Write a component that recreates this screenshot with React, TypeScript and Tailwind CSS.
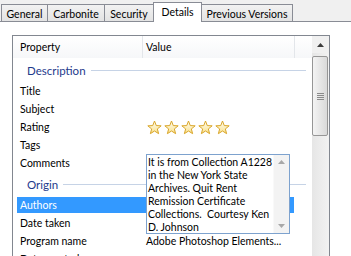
import React from "react";

function Star() {
  return (
    <svg width="15" height="15" viewBox="0 0 15 15">
      <defs>
        <linearGradient id="sg" x1="0" y1="0" x2="0" y2="1">
          <stop offset="0" stopColor="#fffef5" />
          <stop offset="1" stopColor="#f9e08a" />
        </linearGradient>
      </defs>
      <polygon
        points="7.5,1 9.26,5.57 14.16,5.84 10.35,8.93 11.61,13.66 7.5,11 3.39,13.66 4.65,8.93 0.84,5.84 5.74,5.57"
        fill="url(#sg)"
        stroke="#d9a62a"
        strokeWidth="1"
        strokeLinejoin="round"
      />
    </svg>
  );
}

function Tab({ label, w, selected }: { label: string; w: string; selected?: boolean }) {
  if (selected) {
    return (
      <div
        className={`${w} -ml-px h-[20px] mb-[-1px] relative z-10 bg-white border border-b-0 border-[#898c95] flex items-center justify-center pb-[1px]`}
      >
        {label}
      </div>
    );
  }
  return (
    <div
      className={`${w} -ml-px first:ml-0 h-[17px] bg-gradient-to-b from-[#f2f2f2] to-[#e3e3e3] border border-b-0 border-[#898c95] flex items-center justify-center pt-[2px]`}
    >
      {label}
    </div>
  );
}

function Row({ label, children, selected }: { label: string; children?: React.ReactNode; selected?: boolean }) {
  return (
    <div className="h-[18px] relative flex">
      <div
        className={`flex items-center ml-[4px] my-[1px] w-[277px] ${selected ? "bg-[#3399ff] text-white" : ""}`}
      >
        <div className="w-[129px] pl-[3px] whitespace-nowrap">{label}</div>
        <div className="flex-1 whitespace-nowrap flex items-center">{children}</div>
      </div>
    </div>
  );
}

function Group({ label }: { label: string }) {
  return (
    <div className="h-[24px] flex items-center pl-[14px] pr-[6px] pt-[1px]">
      <span className="text-[#1e3a8c] text-[11.5px]">{label}</span>
      <div className="flex-1 h-px bg-[#c6d3e6] ml-[5px]" />
    </div>
  );
}

export default function App() {
  return (
    <div className="w-[351px] h-[256px] overflow-hidden bg-white text-[10.5px] leading-[13px] text-black font-['Lato',sans-serif] flex flex-col">
      {/* tab strip */}
      <div className="h-[22px] shrink-0 bg-[#f0f0f0] border-b border-[#898c95] flex items-end pl-[1px]">
        <Tab label="General" w="w-[47px]" />
        <Tab label="Carbonite" w="w-[58px]" />
        <Tab label="Security" w="w-[50px]" />
        <Tab label="Details" w="w-[49px]" selected />
        <Tab label="Previous Versions" w="w-[92px]" />
      </div>

      {/* panel */}
      <div className="flex-1 bg-white pl-[12px] pt-[13px]">
        <div className="w-[318px] h-[260px] border border-[#828790] flex bg-white">
          {/* list content */}
          <div className="w-[299px] flex flex-col">
            {/* header */}
            <div className="h-[22px] flex bg-gradient-to-b from-white to-[#f6f7f9]">
              <div className="w-[130px] pl-[7px] flex items-center border-r border-[#e3e6ea]">Property</div>
              <div className="w-[152px] pl-[3px] flex items-center border-r border-[#e3e6ea]">Value</div>
              <div className="flex-1" />
            </div>

            <Group label="Description" />
            <Row label="Title" />
            <Row label="Subject" />
            <Row label="Rating">
              <div className="flex gap-[2px] ml-[1px]">
                <Star />
                <Star />
                <Star />
                <Star />
                <Star />
              </div>
            </Row>
            <Row label="Tags" />
            <div className="h-[18px] relative z-10">
              <div className="flex items-center h-full ml-[4px]">
                <div className="w-[129px] pl-[3px]">Comments</div>
              </div>
              <div className="absolute left-[133px] top-0 w-[144px] h-[80px] border border-[#7da2ce] bg-white flex">
                <div className="flex-1 pl-[1px] pt-[1px] leading-[13px] whitespace-nowrap overflow-hidden">
                  <div>It is from Collection A1228</div>
                  <div>in the New York State</div>
                  <div>Archives. Quit Rent</div>
                  <div>Remission Certificate</div>
                  <div>Collections.&nbsp; Courtesy Ken</div>
                  <div>D. Johnson</div>
                </div>
                <div className="w-[16px] bg-[#f3f3f3] border-l border-[#f9f9f9] flex flex-col items-center justify-between py-[5px]">
                  <svg width="7" height="4" viewBox="0 0 7 4">
                    <polygon points="0,4 7,4 3.5,0" fill="#a8a8a8" />
                  </svg>
                  <svg width="7" height="4" viewBox="0 0 7 4">
                    <polygon points="0,0 7,0 3.5,4" fill="#a8a8a8" />
                  </svg>
                </div>
              </div>
            </div>

            <Group label="Origin" />
            <Row label="Authors" selected />
            <Row label="Date taken" />
            <Row label="Program name">Adobe Photoshop Elements...</Row>
            <Row label="Date created" />
          </div>

          {/* scrollbar */}
          <div className="w-[17px] bg-gradient-to-r from-[#e6e6e6] to-[#f2f2f2] flex flex-col">
            <div className="h-[17px] flex items-center justify-center bg-[#f0f0f0]">
              <svg width="7" height="4" viewBox="0 0 7 4">
                <polygon points="0,4 7,4 3.5,0" fill="#3c3c3c" />
              </svg>
            </div>
            <div className="mt-[3px] ml-0 w-[16px] h-[80px] rounded-[2px] border border-[#969696] bg-gradient-to-r from-[#f4f4f4] to-[#d9d9d9] flex flex-col items-center justify-center gap-[1px]">
              <div className="w-[7px] h-px bg-[#8a8a8a]" />
              <div className="w-[7px] h-px bg-[#8a8a8a]" />
              <div className="w-[7px] h-px bg-[#8a8a8a]" />
              <div className="w-[7px] h-px bg-[#8a8a8a]" />
            </div>
          </div>
        </div>
      </div>
    </div>
  );
}
